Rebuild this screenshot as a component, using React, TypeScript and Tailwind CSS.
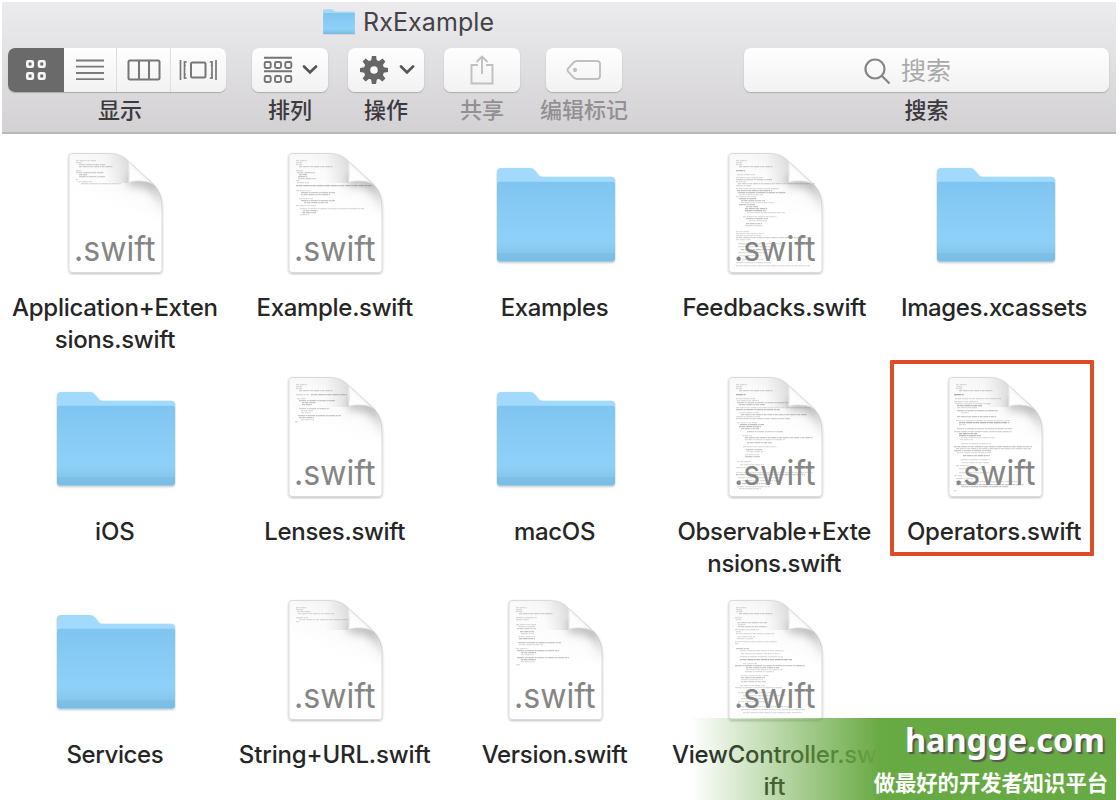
import React from "react";

type Line = [y: number, x: number, width: number, strength?: number];

type Item = {
  kind: "file" | "folder";
  label: string[];
  spacing: string;
  code?: Line[];
  highlighted?: boolean;
};

const head: Line[] = [
  [8, 9, 11], [10, 9, 6], [12, 9, 7], [14, 12, 34, 0.5],
];

const application: Line[] = [
  [8, 9, 20], [10, 9, 6], [12, 12, 26, 0.5], [14, 12, 34, 0.5],
  [18, 9, 5], [20, 9, 28, 0.5], [22, 12, 8, 0.6], [24, 12, 26, 0.5],
  [27, 9, 2], [29, 11, 14], [31, 14, 40],
];
const example: Line[] = [
  ...head, [18, 9, 7], [20, 10, 18, 0.5], [22, 12, 8, 0.6], [24, 11, 9, 0.6], [26, 11, 18, 0.5],
  [28, 9, 4], [30, 10, 12], [33, 9, 76, 0.7],
  [38, 9, 14], [40, 14, 34, 0.6], [42, 14, 29, 0.6],
  [46, 12, 14], [48, 14, 34, 0.6], [50, 17, 24, 0.6],
  [53, 9, 20], [56, 13, 64], [58, 16, 15, 0.6], [60, 15, 14, 0.6], [62, 13, 9],
];
const feedbacks: Line[] = [
  ...head, [18, 9, 9, 0.7], [22, 10, 18], [25, 9, 27], [27, 9, 36, 0.5], [29, 9, 10],
  [31, 11, 77, 0.5], [33, 9, 15], [36, 9, 43], [38, 10, 35, 0.65], [40, 11, 48, 0.65], [42, 12, 24],
  [44, 9, 21], [46, 12, 18, 0.65], [48, 14, 24, 0.6], [50, 14, 34], [52, 12, 16, 0.6],
  [54, 19, 12, 0.6], [56, 18, 22, 0.7], [58, 18, 21, 0.7], [60, 20, 38],
  [64, 16, 34], [66, 19, 22, 0.6], [68, 22, 18], [71, 19, 16, 0.6], [73, 18, 18],
  [79, 9, 13], [81, 9, 28], [83, 9, 25], [85, 9, 76, 0.5], [87, 9, 15],
  [91, 11, 43], [94, 11, 32], [97, 14, 31, 0.65], [100, 11, 27], [103, 12, 22],
  [107, 11, 25], [110, 9, 35], [113, 9, 74],
];
const lenses: Line[] = [
  ...head, [18, 9, 13], [18, 24, 36, 0.65],
  [22, 10, 9], [24, 12, 36, 0.6], [26, 15, 14, 0.6], [28, 15, 10, 0.6],
  [32, 12, 31, 0.5], [34, 14, 12], [36, 14, 10],
  [39, 11, 43, 0.6], [41, 12, 15, 0.6], [43, 14, 13], [45, 8, 3],
];
const observable: Line[] = [
  ...head, [18, 9, 10, 0.8], [22, 9, 19], [24, 10, 22], [26, 10, 52, 0.5], [28, 12, 26, 0.6],
  [31, 9, 75], [33, 9, 44, 0.65], [36, 12, 20], [38, 14, 66, 0.6], [40, 9, 24],
  [42, 9, 54, 0.5], [46, 10, 20], [48, 13, 24, 0.7], [50, 12, 22, 0.7], [52, 14, 18, 0.6],
  [55, 20, 36, 0.5], [59, 15, 10], [61, 18, 68, 0.6], [63, 18, 40], [66, 20, 25, 0.6],
  [70, 16, 34], [73, 19, 16, 0.6], [75, 20, 16], [78, 18, 15], [80, 18, 15, 0.6],
  [85, 10, 14], [88, 13, 24], [91, 9, 10], [96, 9, 77], [98, 9, 69, 0.6],
  [101, 11, 42], [104, 12, 38], [107, 11, 34, 0.6], [110, 10, 33], [112, 12, 22],
];
const operators: Line[] = [
  ...head, [18, 7, 10, 0.9], [22, 8, 46], [25, 7, 24], [27, 8, 36], [29, 10, 25, 0.75],
  [31, 10, 20], [34, 10, 41, 0.6], [36, 14, 8], [40, 10, 39, 0.6],
  [44, 9, 54], [46, 12, 50, 0.8], [48, 12, 7], [52, 10, 55, 0.5],
  [55, 7, 58, 0.5], [57, 12, 18, 0.8], [59, 12, 22, 0.7], [61, 14, 34], [63, 13, 13],
  [67, 14, 30], [70, 7, 78, 0.6], [72, 9, 75, 0.5], [74, 7, 37, 0.6], [76, 10, 35],
  [79, 16, 27, 0.7], [83, 14, 29], [86, 15, 27], [89, 9, 12], [92, 12, 24], [96, 12, 30],
  [99, 7, 8], [102, 9, 17], [105, 9, 65], [108, 9, 68, 0.6], [110, 14, 47, 0.6], [114, 7, 3],
];
const stringUrl: Line[] = [[8, 9, 11], [10, 9, 7], [12, 10, 14], [14, 11, 36], [18, 9, 12], [20, 12, 52], [22, 9, 4]];
const version: Line[] = [
  ...head, [18, 9, 21], [20, 9, 13], [25, 9, 20], [27, 11, 17], [29, 10, 19, 0.5],
  [32, 13, 14, 0.65], [34, 14, 13], [37, 11, 17], [39, 12, 16, 0.7], [43, 11, 43, 0.6], [45, 12, 24],
  [49, 9, 12], [51, 10, 42, 0.6], [53, 14, 15, 0.65], [55, 14, 13],
  [58, 10, 52, 0.6], [60, 14, 15, 0.7], [62, 14, 14], [65, 9, 4],
];
const viewController: Line[] = [
  ...head, [18, 8, 7], [20, 9, 5], [23, 10, 30, 0.5], [25, 11, 8], [27, 11, 29, 0.5],
  [30, 8, 24], [32, 9, 5], [34, 9, 38], [37, 11, 17], [39, 10, 16], [42, 8, 42],
  [44, 8, 4], [49, 9, 13, 0.6], [51, 13, 44], [54, 14, 39], [57, 13, 43], [60, 13, 52, 0.75],
  [64, 16, 14], [66, 8, 70, 0.6], [68, 19, 33, 0.6], [70, 19, 37], [72, 18, 29],
  [76, 14, 28], [78, 14, 24, 0.6], [80, 14, 22], [82, 14, 25, 0.5], [86, 13, 25], [88, 8, 47],
  [93, 11, 33], [96, 16, 42], [99, 14, 32], [102, 11, 35], [107, 14, 50], [110, 14, 64], [113, 16, 59],
];

const items: Item[] = [
  { kind: "file", label: ["Application+Exten", "sions.swift"], spacing: "tracking-[-0.28px]", code: application },
  { kind: "file", label: ["Example.swift"], spacing: "tracking-[-0.3px]", code: example },
  { kind: "folder", label: ["Examples"], spacing: "tracking-[-0.38px]" },
  { kind: "file", label: ["Feedbacks.swift"], spacing: "tracking-[-0.28px]", code: feedbacks },
  { kind: "folder", label: ["Images.xcassets"], spacing: "tracking-[-0.4px]" },
  { kind: "folder", label: ["iOS"], spacing: "tracking-[0px]" },
  { kind: "file", label: ["Lenses.swift"], spacing: "tracking-[-0.33px]", code: lenses },
  { kind: "folder", label: ["macOS"], spacing: "tracking-[-0.3px]" },
  { kind: "file", label: ["Observable+Exte", "nsions.swift"], spacing: "tracking-[-0.33px]", code: observable },
  { kind: "file", label: ["Operators.swift"], spacing: "tracking-[-0.2px]", code: operators, highlighted: true },
  { kind: "folder", label: ["Services"], spacing: "tracking-[-0.38px]" },
  { kind: "file", label: ["String+URL.swift"], spacing: "tracking-[-0.15px]", code: stringUrl },
  { kind: "file", label: ["Version.swift"], spacing: "tracking-[-0.3px]", code: version },
  { kind: "file", label: ["ViewController.sw", "ift"], spacing: "tracking-[-0.25px]", code: viewController },
];

const pagePath =
  "M6 3.500H43C53 3.500 58 7 62 11L87 34C93 40 96 47 96 57V119.500Q96 122.500 93 122.500H6Q3 122.500 3 119.500V6.500Q3 3.500 6 3.500Z";

function Defs() {
  return (
    <svg className="absolute h-0 w-0" aria-hidden="true">
      <defs>
        <linearGradient id="folderFront" x1="0" y1="0" x2="0" y2="1">
          <stop offset="0" stopColor="#7fc5f1" />
          <stop offset="0.45" stopColor="#89cdf6" />
          <stop offset="0.75" stopColor="#8ed1f8" />
          <stop offset="0.89" stopColor="#85c6ec" />
          <stop offset="0.9" stopColor="#80c0e6" />
          <stop offset="1" stopColor="#79bce5" />
        </linearGradient>
        <linearGradient id="pageFill" x1="0.3" y1="1" x2="0.62" y2="0">
          <stop offset="0.55" stopColor="#ffffff" />
          <stop offset="0.8" stopColor="#fafafa" />
          <stop offset="1" stopColor="#f0f0f0" />
        </linearGradient>
        <linearGradient id="leftShade" x1="0" y1="0" x2="1" y2="0">
          <stop offset="0.3" stopColor="#888" stopOpacity="0" />
          <stop offset="1" stopColor="#888" stopOpacity="0.2" />
        </linearGradient>
        <linearGradient id="curl" x1="0" y1="1" x2="0.65" y2="0.35">
          <stop offset="0" stopColor="#ffffff" />
          <stop offset="0.6" stopColor="#fdfdfd" />
          <stop offset="1" stopColor="#ececec" />
        </linearGradient>
        <clipPath id="pageClip"><path d={pagePath} /></clipPath>
        <filter id="soft" x="-50%" y="-50%" width="200%" height="200%">
          <feGaussianBlur stdDeviation="5" />
        </filter>
        <filter id="drop" x="-10%" y="-10%" width="120%" height="120%">
          <feDropShadow dx="0" dy="1" stdDeviation="1" floodColor="#000" floodOpacity="0.26" />
        </filter>
      </defs>
    </svg>
  );
}

function FolderIcon({ className }: { className: string }) {
  return (
    <svg viewBox="4 16 120 101" preserveAspectRatio="none" className={className}>
      <g filter="url(#drop)">
        <path d="M5 22q0-4 4-4h29q3 0 5 2.500l4 5q1 1.500 3 1.500h69q4 0 4 4v79q0 3.500-3.500 3.500h-111q-3.500 0-3.500-3.500z" fill="#a1dafa" />
        <path d="M5 35q0-3 3-3h112q3 0 3 3v75q0 3.500-3.500 3.500h-111q-3.500 0-3.500-3.500z" fill="url(#folderFront)" />
      </g>
    </svg>
  );
}

function FileIcon({ code }: { code: Line[] }) {
  return (
    <svg viewBox="0 0 100 126" className="ml-[3px] h-[126px] w-[100px]">
      <path d={pagePath} fill="url(#pageFill)" stroke="#dadada" strokeWidth="1" filter="url(#drop)" />
      <g clipPath="url(#pageClip)">
        <path d="M30 4H43C53 4 58 7 62 11V33L30 33Z" fill="url(#leftShade)" />
        <path d="M62 25L90 28L100 62L90 46C84 38 74 35 62 36Z" fill="#777" fillOpacity="0.5" filter="url(#soft)" />
      </g>
      <g>
        {code.map(([y, x, w, strength = 0.38], i) => (
          <path
            key={i}
            d={`M${x + 1} ${y + 2.700}h${w}`}
            stroke="#777"
            strokeWidth="1.300"
            strokeDasharray={i % 3 === 0 ? "3 .7 5 .5 1.500 .6" : i % 3 === 1 ? "7 .6 2 .5" : "2 .5 4 .8 6 .5"}
            strokeOpacity={strength * 0.68}
          />
        ))}
      </g>
      <path d="M61.500 10.500C63.500 16 63.500 25 62.500 32.500C70 30 81 30.500 87.500 34.500Z" fill="url(#curl)" stroke="#d8d8d8" strokeWidth="0.800" />
      <text x="8" y="111" fontSize="34" textLength="81.500" lengthAdjust="spacingAndGlyphs" fill="#858585" fontFamily="Inter, sans-serif">.swift</text>
    </svg>
  );
}

function Cell({ item }: { item: Item }) {
  return (
    <div className="relative flex flex-col items-center">
      {item.highlighted && <div className="absolute -top-[14px] left-[6px] h-[196px] w-[204px] rounded-[1px] border-[4px] border-[#dc4d27]" />}
      <div className="flex h-[126px] items-start justify-center">
        {item.kind === "file" ? <FileIcon code={item.code ?? []} /> : <FolderIcon className="mt-[16px] ml-[3px] h-[99px] w-[120px]" />}
      </div>
      <div className="mt-4 text-center text-[24px] leading-[32px] font-medium text-[#262626]">
        {item.label.map((line) => (
          <div key={line} className={"whitespace-nowrap " + item.spacing}>{line}</div>
        ))}
      </div>
    </div>
  );
}

function Chevron() {
  return (
    <svg viewBox="0 0 16 10" className="h-[10px] w-[16px]">
      <path d="M2 1.500 8 7.500 14 1.500" fill="none" stroke="#555" strokeWidth="2.600" strokeLinecap="round" />
    </svg>
  );
}

const button = "flex h-[44px] items-center justify-center rounded-[7px] bg-linear-to-b from-[#fefefe] to-[#f2f2f2] shadow-[0_1px_1.500px_rgba(0,0,0,0.22)]";
const caption = "mt-[5px] text-center text-[22px] leading-[26px] font-medium whitespace-nowrap";

function ViewSwitcher() {
  return (
    <div className="w-[218px]">
      <div className="flex h-[44px] w-[218px] overflow-hidden rounded-[7px] bg-linear-to-b from-[#fefefe] to-[#f2f2f2] shadow-[0_1px_1px_rgba(0,0,0,0.22)]">
        <div className="flex w-[56px] items-center justify-center bg-[#6a6a6a]">
          <svg viewBox="0 0 22 22" className="h-[22px] w-[22px]" fill="none" stroke="#f6f6f6" strokeWidth="2.600">
            <rect x="2.300" y="2.300" width="5.500" height="5.500" rx="1" />
            <rect x="14" y="2.300" width="5.500" height="5.500" rx="1" />
            <rect x="2.300" y="14.200" width="5.500" height="5.500" rx="1" />
            <rect x="14" y="14.200" width="5.500" height="5.500" rx="1" />
          </svg>
        </div>
        <div className="flex w-[53px] items-center justify-center border-r border-[#dedede]">
          <svg viewBox="0 0 30 22" className="h-[22px] w-[30px]" stroke="#7b7b7b" strokeWidth="1.800">
            <path d="M1 1.500h28M1 7.700h28M1 14h28M1 20.200h28" />
          </svg>
        </div>
        <div className="flex w-[54px] items-center justify-center border-r border-[#dedede]">
          <svg viewBox="0 0 34 22" className="h-[22px] w-[34px]" fill="none" stroke="#777" strokeWidth="2">
            <rect x="1.500" y="1.500" width="31" height="19" rx="1.500" />
            <path d="M12 2v18M22 2v18" />
          </svg>
        </div>
        <div className="flex w-[55px] items-center justify-center pr-[2px]">
          <svg viewBox="0 0 38 22" className="h-[22px] w-[38px]" fill="none" stroke="#777" strokeWidth="1.700">
            <rect x="12" y="3.500" width="14.500" height="15" rx="1.500" strokeWidth="2" />
            <path d="M1.500 1v20M5.500 2v18M33 2v18M37 1v20" />
            <path d="M5.500 3h2.200M5.500 6.500h1.200M5.500 15.500h1.200M5.500 19h2.200M33 3h-2.200M33 6.500h-1.200M33 15.500h-1.200M33 19h-2.200" />
          </svg>
        </div>
      </div>
      <div className={caption + " mr-[-6px]"}>显示</div>
    </div>
  );
}

function ArrangeIcon() {
  return (
    <svg viewBox="0 0 30 28" className="h-[28px] w-[30px]" fill="none" stroke="#747474" strokeWidth="1.900">
      <path d="M1 1.700h28M1 15.300h28" />
      {[1.700, 12, 22.300].map((x) => (
        <React.Fragment key={x}>
          <rect x={x} y="6" width="6" height="6" rx="1.500" />
          <rect x={x} y="20" width="6" height="6" rx="1.500" />
        </React.Fragment>
      ))}
    </svg>
  );
}

function GearIcon() {
  return (
    <svg viewBox="-15 -15 30 30" className="h-[30px] w-[30px]">
      {Array.from({ length: 8 }, (_, i) => (
        <path key={i} d="M-3-8-2.100-14H2.100L3-8Z" fill="#666" transform={`rotate(${i * 45})`} />
      ))}
      <circle r="7" fill="none" stroke="#666" strokeWidth="6.400" />
    </svg>
  );
}

export default function App() {
  return (
    <div className="relative h-[800px] w-[1120px] overflow-hidden bg-white pt-[2px] pl-[2px] font-['Inter','Noto_Sans_CJK_SC',sans-serif]">
      <Defs />
      <header className="flex h-[132px] w-[1114px] flex-col border-b-2 border-[#b9b7ba] bg-linear-to-b from-[#ecebed] to-[#d3d1d4]">
        <div className="flex h-[46px] items-center pl-[321px]">
          <FolderIcon className="-mt-[6px] h-[26px] w-[32px]" />
          <div className="ml-[8px] -mt-[6px] text-[25px] leading-[30px] tracking-[0.1px] whitespace-nowrap text-[#444246]">RxExample</div>
        </div>
        <div className="flex pl-[6px] text-[#3c3a3e]">
          <ViewSwitcher />
          <div className="ml-[26px] w-[76px]">
            <div className={button + " gap-[9px]"}><ArrangeIcon /><Chevron /></div>
            <div className={caption}>排列</div>
          </div>
          <div className="ml-[20px] w-[76px]">
            <div className={button + " gap-[10px] pl-[2px]"}><GearIcon /><Chevron /></div>
            <div className={caption}>操作</div>
          </div>
          <div className="ml-[20px] w-[76px] text-[#929094]">
            <div className={button}>
              <svg viewBox="0 0 24 32" className="h-[32px] w-[24px]" fill="none" stroke="#c0c0c0" strokeWidth="1.900">
                <path d="M8 11H1.500v18.500h21V11H16M12 20V3M6.500 8 12 2.500 17.500 8" />
              </svg>
            </div>
            <div className={caption}>共享</div>
          </div>
          <div className="ml-[26px] w-[76px] text-[#929094]">
            <div className={button}>
              <svg viewBox="0 0 36 22" className="h-[22px] w-[36px]" fill="none" stroke="#c0c0c0" strokeWidth="1.900">
                <path d="M11 2H31q3 0 3 3v12q0 3-3 3H11Q9 20 7 18L2 12.500Q1 11 2 9.500L7 4Q9 2 11 2Z" />
                <circle cx="9" cy="11" r="1.200" />
              </svg>
            </div>
            <div className={caption + " mx-[-10px]"}>编辑标记</div>
          </div>
          <div className="ml-[122px] w-[365px]">
            <div className={button + " gap-[10px] pr-[40px] pl-[2px]"}>
              <svg viewBox="0 0 27 27" className="mt-[3px] h-[27px] w-[27px]" fill="none" stroke="#858585" strokeWidth="2.200">
                <circle cx="11" cy="11" r="9.500" />
                <path d="m18 18 7.500 7.500" />
              </svg>
              <div className="mt-[2px] text-[25px] leading-[30px] text-[#aaa]">搜索</div>
            </div>
            <div className={caption}>搜索</div>
          </div>
        </div>
      </header>
      <main className="grid auto-rows-[223.700px] grid-cols-[repeat(5,219.800px)] pt-[16px] pl-[3px]">
        {items.map((item) => <Cell key={item.label[0]} item={item} />)}
      </main>
      <div className="absolute top-[718px] left-[690px] flex h-[82px] w-[426px] flex-col items-end bg-linear-to-r from-[#67a942]/0 to-[#67a942] to-45% pr-[8px] text-white">
        <div className="mr-[3px] font-['Noto_Sans',sans-serif] text-[32.500px] leading-[44px] font-bold [text-shadow:2px_2px_1px_#555]">hangge.com</div>
        <div className="mt-[1px] font-['Noto_Sans_CJK_SC',sans-serif] text-[21.300px] leading-[38px] font-bold whitespace-nowrap">做最好的开发者知识平台</div>
      </div>
    </div>
  );
}
